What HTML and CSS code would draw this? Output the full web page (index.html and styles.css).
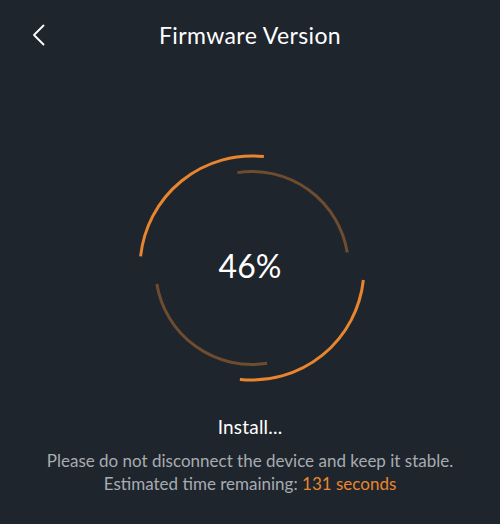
FILE: index.html
```html
<!DOCTYPE html>
<html>
<head>
<meta charset="utf-8">
<link rel="stylesheet" href="styles.css">
</head>
<body>
<div class="screen">
  <header class="topbar">
    <span class="back">
      <svg width="14" height="22" viewBox="0 0 14 22"><path d="M11.5 1.5 L2 11 L11.5 20.5" fill="none" stroke="#ffffff" stroke-width="1.8" stroke-linecap="round" stroke-linejoin="round"/></svg>
    </span>
    <h1 class="title">Firmware Version</h1>
  </header>
  <section class="ring-wrap">
    <svg class="ring" width="500" height="240" viewBox="0 0 500 240">
      <circle cx="252" cy="120" r="112" fill="none" stroke="#e8852f" stroke-width="3" stroke-dasharray="175.9 175.9" transform="rotate(186 252 120)"/>
      <circle cx="252" cy="120" r="96.5" fill="none" stroke="#6e4c2f" stroke-width="3" stroke-dasharray="150.5 152.7" transform="rotate(81 252 120)"/>
    </svg>
    <div class="percent">46%</div>
  </section>
  <p class="status">Install...</p>
  <p class="note">Please do not disconnect the device and keep it stable.<br>Estimated time remaining: <span class="accent">131 seconds</span></p>
</div>
</body>
</html>
```
FILE: styles.css
```css
html, body {
  margin: 0;
  padding: 0;
  background: #1f252c;
}
.screen {
  width: 500px;
  height: 524px;
  display: flex;
  flex-direction: column;
  font-family: "Lato", "Noto Sans", sans-serif;
  color: #ffffff;
}
.topbar {
  position: relative;
  height: 70px;
  display: flex;
  align-items: center;
  justify-content: center;
}
.back {
  position: absolute;
  left: 32px;
  top: 24px;
  display: flex;
}
.title {
  margin: 0;
  font-size: 23px;
  font-weight: 400;
  letter-spacing: 0.4px;
}
.ring-wrap {
  position: relative;
  margin-top: 78px;
  height: 240px;
}
.ring {
  display: block;
}
.percent {
  position: absolute;
  left: 0;
  right: 0;
  top: 98px;
  text-align: center;
  font-size: 32px;
  line-height: 40px;
}
.status {
  margin: 27px 0 0;
  text-align: center;
  font-size: 19px;
  line-height: 24px;
  letter-spacing: 0.2px;
}
.note {
  margin: 10px 0 0;
  text-align: center;
  font-size: 17px;
  line-height: 23px;
  color: #a7acb2;
}
.accent {
  color: #e8852f;
}
```
